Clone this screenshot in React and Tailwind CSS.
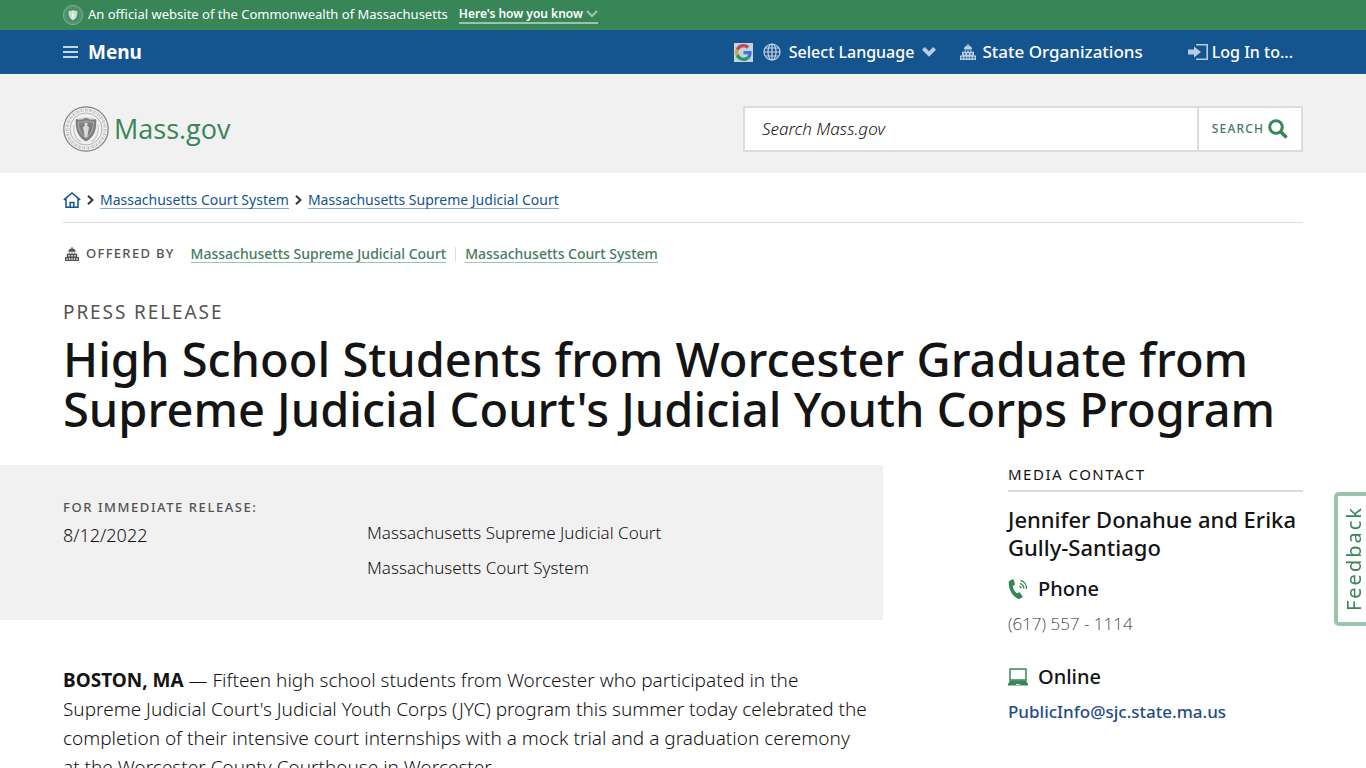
import React from "react";

const Seal = ({ className }) => (
  <svg viewBox="0 0 46 46" className={className} fill="none" stroke="currentColor" aria-hidden="true">
    <circle cx="23" cy="23" r="22.200" strokeWidth="1.200" />
    <circle cx="23" cy="23" r="19" strokeWidth="3" strokeDasharray="1.500 0.900 0.700 1.300" opacity="0.45" />
    <circle cx="23" cy="23" r="16" strokeWidth="0.700" opacity="0.8" />
    <path d="M12 15c4-4 18-4 22 0M11 19c-1 8 2 14 7 17M35 19c1 8-2 14-7 17" strokeWidth="1.200" opacity="0.35" />
    <path d="M13 13c3.200 1.200 6.500.6 10-1.300 3.500 1.900 6.800 2.500 10 1.300 1.200 9.500-1.500 18-10 22.500-8.500-4.500-11.200-13-10-22.500z" fill="currentColor" stroke="none" />
    <path d="M15.500 16c2.800.5 5 0 7.500-1.300 2.500 1.300 4.700 1.800 7.500 1.300.4 7-2.400 12.500-7.500 16-5.100-3.500-7.900-9-7.500-16z" stroke="#fff" strokeWidth="0.700" opacity="0.5" />
    <path d="M23 16.500a1.600 1.600 0 0 1 1 2.900l2 2-1 5-.6 4.600h-2.800l-.6-4.600-1-5 2-2a1.600 1.600 0 0 1 1-2.900z" fill="#fff" stroke="none" opacity="0.7" />
  </svg>
);

const Capitol = ({ className }) => (
  <svg viewBox="0 0 16 16" className={className} fill="currentColor" aria-hidden="true">
    <path d="M7.400 0h1.200v1.600A4.200 4.200 0 0 1 12.200 5.500H3.800a4.200 4.200 0 0 1 3.600-3.900z" />
    <path d="M4.500 6.200h1.400v1.600H4.500zM7.300 6.200h1.400v1.600H7.300zM10.100 6.200h1.400v1.600h-1.400z" />
    <path fillRule="evenodd" d="M2 7.800h12v3.700h2V16H0v-4.500h2zM3.800 9.200v1.600h1.600V9.200zM7.200 9.200v1.600h1.600V9.200zM10.600 9.200v1.600h1.600V9.200zM1.500 12.800v1.700H3v-1.700zM4.400 12.800v1.700h1.500v-1.700zM7.250 12.800v1.700h1.500v-1.700zM10.100 12.800v1.700h1.500v-1.700zM13 12.800v1.700h1.500v-1.700z" />
  </svg>
);

const GoogleLogo = () => (
  <span className="flex h-[19px] w-[19px] items-center justify-center bg-[#c3d3e2]">
    <svg viewBox="0 0 48 48" className="h-[17px] w-[17px]" aria-hidden="true">
      <path fill="#c04a52" d="M24 9.500c3.540 0 6.710 1.220 9.210 3.600l6.850-6.850C35.900 2.380 30.470 0 24 0 14.620 0 6.510 5.380 2.560 13.220l7.980 6.190C12.430 13.720 17.740 9.500 24 9.500z" />
      <path fill="#3f78c8" d="M46.980 24.550c0-1.570-.15-3.090-.38-4.550H24v9.020h12.940c-.58 2.960-2.260 5.480-4.780 7.180l7.730 6c4.510-4.180 7.090-10.360 7.090-17.650z" />
      <path fill="#cfa93a" d="M10.530 28.590c-.48-1.450-.76-2.990-.76-4.590s.27-3.140.76-4.590l-7.980-6.190C.92 16.460 0 20.120 0 24s.92 7.540 2.560 10.780z" />
      <path fill="#35955f" d="M24 48c6.480 0 11.930-2.130 15.890-5.810l-7.730-6c-2.150 1.450-4.920 2.300-8.160 2.300-6.260 0-11.570-4.220-13.470-9.910l-7.980 6.190C6.510 42.620 14.620 48 24 48z" />
    </svg>
  </span>
);

const Globe = () => (
  <svg viewBox="0 0 18 18" className="h-[18px] w-[18px] text-[#c4d5e5]" fill="none" stroke="currentColor" strokeWidth="1.2" aria-hidden="true">
    <circle cx="9" cy="9" r="8" />
    <ellipse cx="9" cy="9" rx="4" ry="8" />
    <path d="M9 1v16M1 9h16M2.200 5h13.600M2.200 13h13.600" />
  </svg>
);

const Chevron = ({ className }) => (
  <svg viewBox="0 0 14 10" className={className} fill="currentColor" aria-hidden="true">
    <path d="M0 2.800 2.800 0 7 4.200 11.200 0 14 2.800 7 9.800z" />
  </svg>
);

const Crumb = () => (
  <svg viewBox="0 0 7 10" className="h-[10px] w-[7px] text-[#3c3c3c]" fill="none" stroke="currentColor" strokeWidth="2.200" aria-hidden="true">
    <path d="M1 .8 5.500 5 1 9.200" />
  </svg>
);

const CourtLink = ({ className, children }) => (
  <a href="#court" className={`border-b leading-4 ${className}`}>
    {children}
  </a>
);

export default function App() {
  return (
    <div className="min-h-screen bg-white font-['Noto_Sans','Open_Sans',sans-serif] text-[#141414]">
      <div className="flex h-[30px] items-center bg-[#388557] px-[63px] text-[13px] text-white">
        <Seal className="h-5 w-5 text-[#c3dacd]" />
        <span className="ml-[5px]">An official website of the Commonwealth of Massachusetts</span>
        <button type="button" className="ml-[11px] flex items-center gap-[3px] border-b-2 border-[#9cc3ab] text-[12px] leading-4 font-semibold">
          Here's how you know
          <svg viewBox="0 0 12 8" className="h-2 w-3 text-[#9cc3ab]" fill="none" stroke="currentColor" strokeWidth="2" aria-hidden="true">
            <path d="m1 1 5 5 5-5" />
          </svg>
        </button>
      </div>

      <nav className="flex h-11 items-center bg-[#14558f] px-[63px] text-[16px] font-medium text-white">
        <button type="button" className="flex items-center gap-[10px] text-[19px] font-bold">
          <svg viewBox="0 0 15 12" className="h-3 w-[15px] text-[#c4d5e5]" fill="currentColor" aria-hidden="true">
            <path d="M0 0h15v2H0zM0 5h15v2H0zM0 10h15v2H0z" />
          </svg>
          Menu
        </button>
        <button type="button" className="ml-auto flex items-center">
          <GoogleLogo />
          <span className="mr-2 ml-[10px]"><Globe /></span>
          Select Language
          <Chevron className="ml-2 h-[10px] w-[14px] text-[#b9cde0]" />
        </button>
        <button type="button" className="ml-6 flex items-center gap-[6px] text-[17px]">
          <Capitol className="h-4 w-4 text-[#b9cde0]" />
          State Organizations
        </button>
        <button type="button" className="mr-[10px] ml-[45px] flex items-center gap-1">
          <svg viewBox="0 0 20 16" className="h-4 w-5 text-[#b9cde0]" aria-hidden="true">
            <path d="M0 5.500h6V2.500L13 8l-7 5.500v-3H0z" fill="currentColor" />
            <path d="M8 .8h11.200v14.400H8" fill="none" stroke="currentColor" strokeWidth="1.600" />
          </svg>
          Log In to...
        </button>
      </nav>

      <header className="flex h-[99px] items-center justify-between bg-[#f1f1f1] px-[63px] pt-[10px]">
        <a href="#home" className="flex items-center gap-[5px] font-['Open_Sans','Noto_Sans',sans-serif] text-[27px] leading-8 text-[#388557]">
          <Seal className="h-[46px] w-[46px] text-[#808080]" />
          Mass.gov
        </a>
        <form className="flex h-[46px] w-[560px] border-2 border-[#dcdcdc] bg-white" onSubmit={(e) => e.preventDefault()}>
          <input aria-label="Search Mass.gov" placeholder="Search Mass.gov" className="min-w-0 flex-1 px-[17px] text-[17px] font-light italic outline-none placeholder:text-[#141414]" />
          <button type="submit" className="flex w-[104px] items-center justify-center gap-1 border-l-2 border-[#dcdcdc] text-[12px] font-medium tracking-widest text-[#457a5f]">
            SEARCH
            <svg viewBox="0 0 20 20" className="h-5 w-5 text-[#388557]" fill="none" stroke="currentColor" aria-hidden="true">
              <circle cx="8" cy="8" r="6.300" strokeWidth="3" />
              <path d="m12.500 12.500 6 6" strokeWidth="3.600" />
            </svg>
          </button>
        </form>
      </header>

      <div className="px-[63px]">
        <nav aria-label="Breadcrumb" className="flex h-[50px] items-center gap-[6px] border-b border-[#dcdcdc] pt-[5px] text-[14px]">
          <a href="#home" aria-label="Home">
            <svg viewBox="0 0 18 16" className="h-4 w-[18px] text-[#14558f]" fill="none" stroke="currentColor" strokeWidth="1.500" aria-hidden="true">
              <path d="M.8 7.800 9 1l8.200 6.800M3 6.500v8.700h12V6.500" />
              <path d="M7.200 15v-4.500h3.600V15" />
            </svg>
          </a>
          <Crumb />
          <CourtLink className="border-[#89aac7] text-[#14558f]">Massachusetts Court System</CourtLink>
          <Crumb />
          <CourtLink className="border-[#89aac7] text-[#14558f]">Massachusetts Supreme Judicial Court</CourtLink>
        </nav>

        <div className="mt-[21px] flex h-5 items-center text-[14px] font-medium">
          <Capitol className="ml-[2px] h-[14px] w-[14px] text-[#535353]" />
          <span className="mr-4 ml-[7px] text-[13px] tracking-widest text-[#535353]">OFFERED BY</span>
          <CourtLink className="border-[#9cc3ab] text-[#457a5f]">Massachusetts Supreme Judicial Court</CourtLink>
          <span className="mx-[9px] h-[14px] border-l border-[#dcdcdc]" />
          <CourtLink className="border-[#9cc3ab] text-[#457a5f]">Massachusetts Court System</CourtLink>
        </div>

        <p className="mt-9 text-[19px] leading-6 tracking-widest text-[#535353]">PRESS RELEASE</p>
        <h1 className="mt-[10px] text-[47px] leading-[50px] font-medium">
          High School Students from Worcester Graduate from Supreme Judicial Court's Judicial Youth Corps Program
        </h1>

        <div className="mt-[31px] grid grid-cols-[minmax(0,1fr)_295px] gap-[125px]">
          <main>
            <section className="-ml-[63px] grid grid-cols-[304px_1fr] bg-[#f1f1f1] pb-10 pl-[63px]">
              <div className="pt-8">
                <h2 className="text-[13px] leading-5 font-medium tracking-[0.12em] text-[#535353]">FOR IMMEDIATE RELEASE:</h2>
                <p className="mt-[6px] text-[18px] leading-6 font-light">8/12/2022</p>
              </div>
              <ul className="flex flex-col gap-[11px] pt-14 text-[17px] leading-6 font-light">
                <li>Massachusetts Supreme Judicial Court</li>
                <li>Massachusetts Court System</li>
              </ul>
            </section>
            <p className="mt-[46px] pr-[14px] text-[19px] leading-[29px] font-light">
              <strong className="font-bold">BOSTON, MA</strong> — Fifteen high school students from Worcester who participated in the Supreme Judicial Court's Judicial Youth Corps (JYC) program this summer today celebrated the completion of their intensive court internships with a mock trial and a graduation ceremony at the Worcester County Courthouse in Worcester.
            </p>
          </main>

          <aside>
            <h2 className="border-b-2 border-[#dcdcdc] pb-[7px] text-[15px] leading-[18px] tracking-widest">MEDIA CONTACT</h2>
            <h3 className="mt-[13px] text-[22px] leading-7 font-medium">Jennifer Donahue and Erika Gully-Santiago</h3>
            <h4 className="mt-[14px] flex items-center gap-[10px] text-[20px] leading-7 font-medium">
              <svg viewBox="0 0 20 20" className="h-5 w-5 text-[#388557]" aria-hidden="true">
                <path fill="currentColor" d="M1.500 1.800 4.500.3c.6-.2 1 0 1.200.5l1.200 4c.1.500 0 .9-.4 1.200L4.700 7.300c.6 3 2 5.300 4.100 7l2-.9c.5-.2.9-.1 1.200.3l2.400 3.200c.3.500.3.900-.1 1.300l-2.500 1.600c-.6.300-1.200.3-1.800 0C4 16.500.600 10.500.7 3.400c0-.7.2-1.300.8-1.600z" />
                <path fill="none" stroke="currentColor" strokeWidth="1.300" d="M12.500 1.300a8.500 8.500 0 0 1 6 8.700M12 4.300a5.500 5.500 0 0 1 3.800 5.200M11.500 7.200a2.600 2.600 0 0 1 1.600 2.200" />
              </svg>
              Phone
            </h4>
            <p className="mt-[9px] text-[17px] leading-6 font-extralight">(617) 557 - 1114</p>
            <h4 className="mt-[27px] flex items-center gap-[10px] text-[20px] leading-7 font-medium">
              <svg viewBox="0 0 20 18" className="h-[18px] w-5 text-[#388557]" aria-hidden="true">
                <rect x="2" y="1" width="16" height="11" fill="none" stroke="currentColor" strokeWidth="1.500" />
                <path fill="currentColor" d="M2 12.500h16l2 3.500v1.500H0V16z" />
                <path stroke="#fff" strokeWidth="0.800" d="M8 16.500h4" />
              </svg>
              Online
            </h4>
            <a href="mailto:PublicInfo@sjc.state.ma.us" className="mt-[9px] block text-[17px] leading-6 font-medium text-[#1f4d87]">PublicInfo@sjc.state.ma.us</a>
          </aside>
        </div>
      </div>

      <button type="button" className="fixed top-[492px] right-0 flex h-[134px] w-8 items-center justify-center rounded-l-[5px] border-4 border-r-0 border-[#9cc3ab] bg-white pl-1 text-[20px] tracking-widest text-[#388557]">
        <span className="rotate-180 [writing-mode:vertical-rl]">Feedback</span>
      </button>
    </div>
  );
}
